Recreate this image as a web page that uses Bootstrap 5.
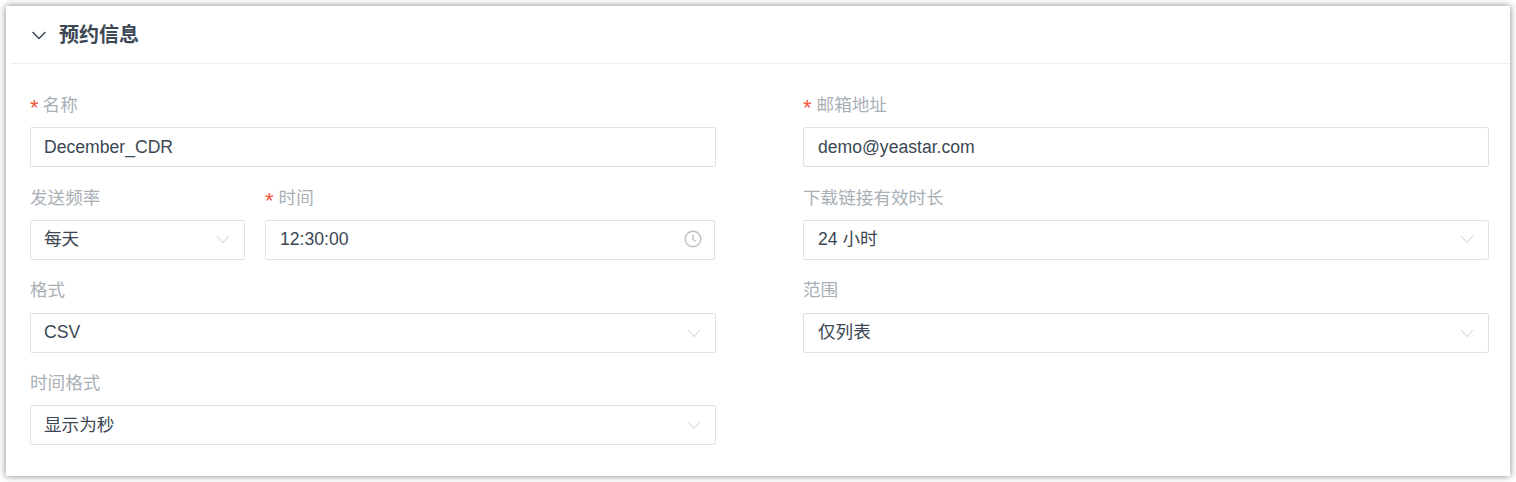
<!DOCTYPE html>
<html lang="zh-CN">
<head>
    <meta charset="UTF-8">
    <meta name="viewport" content="width=device-width, initial-scale=1.0">
    <title>预约信息</title>
    <link href="https://cdn.jsdelivr.net/npm/bootstrap@5.3.0/dist/css/bootstrap.min.css" rel="stylesheet">
    <style>
        body { background: #fff; font-family: "Liberation Sans", "Noto Sans CJK SC", sans-serif; padding: 6px; height: 482px; overflow: hidden; }
        .sched-panel { height: 470px; width: 1504px; border: 0; border-radius: 0; box-shadow: 0 0 7px rgba(0,0,0,.5); }
        .sched-head { height: 58px; margin-left: 5px; padding-left: 19px; gap: 11px; border-bottom: 1px solid #eeeff1; }
        .sched-head span { font-size: 20px; font-weight: 700; color: #3b4754; }
        .sched-body { padding: 30px 21px 0 24px; gap: 87px; }
        .sched-col { width: 686px; }
        .sched-field { margin-bottom: 19.37px; }
        .sched-pair { gap: 20px; }
        .sched-label { height: 33.3px; margin: 0; font-size: 17.6px; line-height: 23px; color: #a9afb6; }
        .sched-label i { font-style: normal; font-size: 22px; line-height: 0; vertical-align: -4px; color: #f2533d; margin-right: 4px; }
        .sched-time .sched-label i, .sched-right .sched-label i { margin-right: 5px; }
        .sched-input { height: 40px; padding: 0 14px 0 13px; font-size: 17.6px; color: #3b4754; border: 1px solid #dfe1e4; border-radius: 2px; }
        .sched-freq { flex: 0 0 215px; }
        .sched-time { flex: 0 0 450px; }
        .sched-time .sched-input { padding-left: 14px; padding-right: 12px; }
        .sched-right .sched-input { padding-left: 14px; }
        .sched-input.sched-second { padding-bottom: 1px; }
    </style>
</head>
<body>
    <div class="card sched-panel">
        <div class="sched-head d-flex align-items-center">
            <svg width="18" height="18" viewBox="0 0 18 18" fill="none" stroke="#3b4754" stroke-width="1.5"><path d="M2.5 6l6.5 6.5L15.5 6"/></svg>
            <span>预约信息</span>
        </div>
        <div class="sched-body d-flex">
            <div class="sched-col">
                <div class="sched-field">
                    <label class="sched-label d-block"><i>*</i>名称</label>
                    <div class="sched-input d-flex align-items-center">December_CDR</div>
                </div>
                <div class="d-flex sched-pair">
                    <div class="sched-field sched-freq">
                        <label class="sched-label d-block">发送频率</label>
                        <div class="sched-input sched-second d-flex align-items-center justify-content-between">每天
                            <svg width="14" height="14" viewBox="0 0 14 14" fill="none" stroke="#d3d6da" stroke-width="1.1"><path d="M1 4l6 6.5L13 4"/></svg>
                        </div>
                    </div>
                    <div class="sched-field sched-time">
                        <label class="sched-label d-block"><i>*</i>时间</label>
                        <div class="sched-input sched-second d-flex align-items-center justify-content-between">12:30:00
                            <svg width="18" height="18" viewBox="0 0 18 18" fill="none" stroke="#bcc0c5" stroke-width="1.4"><circle cx="9" cy="9" r="7.8"/><path d="M9 4.5V9.5l3 2"/></svg>
                        </div>
                    </div>
                </div>
                <div class="sched-field">
                    <label class="sched-label d-block">格式</label>
                    <div class="sched-input d-flex align-items-center justify-content-between">CSV
                        <svg width="14" height="14" viewBox="0 0 14 14" fill="none" stroke="#d3d6da" stroke-width="1.1"><path d="M1 4l6 6.5L13 4"/></svg>
                    </div>
                </div>
                <div class="sched-field">
                    <label class="sched-label d-block">时间格式</label>
                    <div class="sched-input d-flex align-items-center justify-content-between">显示为秒
                        <svg width="14" height="14" viewBox="0 0 14 14" fill="none" stroke="#d3d6da" stroke-width="1.1"><path d="M1 4l6 6.5L13 4"/></svg>
                    </div>
                </div>
            </div>
            <div class="sched-col sched-right">
                <div class="sched-field">
                    <label class="sched-label d-block"><i>*</i>邮箱地址</label>
                    <div class="sched-input d-flex align-items-center">demo@yeastar.com</div>
                </div>
                <div class="sched-field">
                    <label class="sched-label d-block">下载链接有效时长</label>
                    <div class="sched-input sched-second d-flex align-items-center justify-content-between">24 小时
                        <svg width="14" height="14" viewBox="0 0 14 14" fill="none" stroke="#d3d6da" stroke-width="1.1"><path d="M1 4l6 6.5L13 4"/></svg>
                    </div>
                </div>
                <div class="sched-field">
                    <label class="sched-label d-block">范围</label>
                    <div class="sched-input d-flex align-items-center justify-content-between">仅列表
                        <svg width="14" height="14" viewBox="0 0 14 14" fill="none" stroke="#d3d6da" stroke-width="1.1"><path d="M1 4l6 6.5L13 4"/></svg>
                    </div>
                </div>
            </div>
        </div>
    </div>
    <script src="https://cdn.jsdelivr.net/npm/bootstrap@5.3.0/dist/js/bootstrap.bundle.min.js"></script>
</body>
</html>
